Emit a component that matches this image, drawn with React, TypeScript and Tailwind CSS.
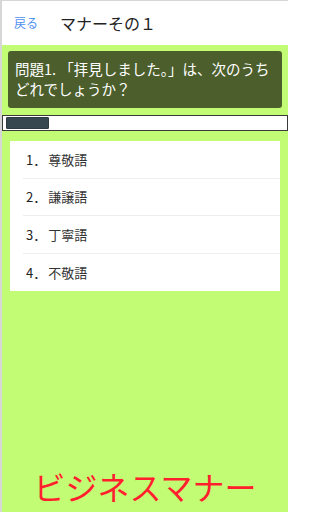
const choices = ['尊敬語', '謙譲語', '丁寧語', '不敬語'];

export default function App() {
  return (
    <div
      className="flex h-[512px] w-[288px] flex-col overflow-hidden border-l-2 border-t border-[#d6d6d6] bg-[#c2fc74]"
      style={{ fontFamily: '"Noto Sans CJK JP", "Noto Sans", sans-serif' }}
    >
      {/* Header */}
      <div className="flex h-[44px] shrink-0 items-center bg-white">
        <span className="ml-[12px] text-[12px] text-[#4f8ff0]">戻る</span>
        <span className="ml-[22px] text-[16px] text-[#222]">マナーその１</span>
      </div>

      {/* Question */}
      <div className="mx-[6px] mt-[6px] rounded-[3px] bg-[#4b5e2c] px-[7px] pb-[9px] pt-[8px] text-[14.5px] leading-[20px] text-white">
        問題1. 「拝見しました。」は、次のうち
        <br />
        どれでしょうか？
      </div>

      {/* Progress */}
      <div className="mt-[7px] h-[16px] border border-[#3a3a3a] bg-white p-[1px] pl-[3px]">
        <div className="h-full w-[43px] rounded-[1px] border border-[#2e3b41] bg-[#37474f]" />
      </div>

      {/* Choices */}
      <div className="mx-[8px] mt-[10px] bg-white">
        {choices.map((c, i) => (
          <div key={c} className="pl-[13px]">
            <div
              className={`flex h-[37.5px] items-center pl-[3px] text-[13px] text-[#333] ${
                i < choices.length - 1 ? 'border-b border-[#eeeeee]' : ''
              }`}
            >
              <span className="text-[#222]">{i + 1}．</span>
              <span className="ml-[2px]">{c}</span>
            </div>
          </div>
        ))}
      </div>

      {/* Footer title */}
      <div className="mt-auto pb-[6px] text-center text-[32px] leading-[40px] text-[#ff1f2d]">
        ビジネスマナー
      </div>
    </div>
  );
}
